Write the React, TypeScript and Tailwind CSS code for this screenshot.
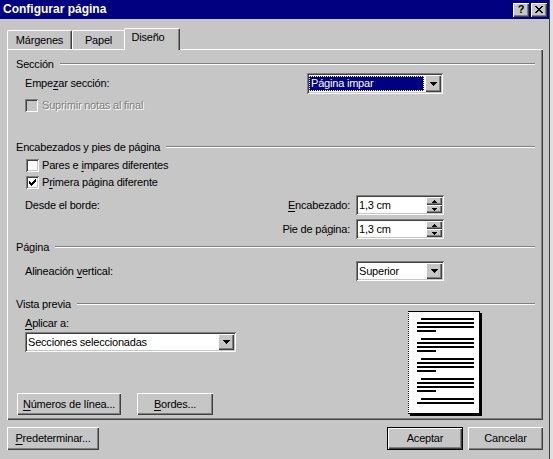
import React from "react";

const RAISED =
  "shadow-[inset_1px_1px_0_#ffffff,inset_-1px_-1px_0_#404040,inset_-2px_-2px_0_#808080]";
const SUNKEN =
  "shadow-[inset_1px_1px_0_#808080,inset_-1px_-1px_0_#ffffff,inset_2px_2px_0_#404040,inset_-2px_-2px_0_#c6c6c6]";

function DownArrow() {
  return (
    <svg width="7" height="4" viewBox="0 0 7 4" shapeRendering="crispEdges">
      <path d="M0 0h7v1H0z M1 1h5v1H1z M2 2h3v1H2z M3 3h1v1H3z" fill="#000" />
    </svg>
  );
}

function SpinUp() {
  return (
    <svg width="5" height="3" viewBox="0 0 5 3" shapeRendering="crispEdges">
      <path d="M2 0h1v1H2z M1 1h3v1H1z M0 2h5v1H0z" fill="#000" />
    </svg>
  );
}

function SpinDown() {
  return (
    <svg width="5" height="3" viewBox="0 0 5 3" shapeRendering="crispEdges">
      <path d="M0 0h5v1H0z M1 1h3v1H1z M2 2h1v1H2z" fill="#000" />
    </svg>
  );
}

function Check() {
  return (
    <svg width="7" height="7" viewBox="0 0 7 7" shapeRendering="crispEdges">
      <path
        d="M6 0h1v1H6z M5 1h2v1H5z M0 2h1v1H0z M4 2h3v1H4z M0 3h2v1H0z M3 3h3v1H3z M0 4h5v1H0z M1 5h3v1H1z M2 6h1v1H2z"
        fill="#000"
      />
    </svg>
  );
}

function CloseX() {
  return (
    <svg width="8" height="7" viewBox="0 0 8 7" shapeRendering="crispEdges">
      <path
        d="M0 0h2v1H0z M6 0h2v1H6z M1 1h2v1H1z M5 1h2v1H5z M2 2h4v1H2z M3 3h2v1H3z M2 4h4v1H2z M1 5h2v1H1z M5 5h2v1H5z M0 6h2v1H0z M6 6h2v1H6z"
        fill="#000"
      />
    </svg>
  );
}

function Combo({
  className,
  children,
  selected,
}: {
  className: string;
  children: React.ReactNode;
  selected?: boolean;
}) {
  return (
    <div className={`${className} ${SUNKEN} bg-white flex p-[2px]`}>
      {selected ? (
        <div className="flex-1 flex items-center my-[1px] mr-[1px] bg-[#000080] text-white border border-dotted border-[#ffffc0] pl-[1px] whitespace-nowrap">
          {children}
        </div>
      ) : (
        <div className="flex-1 flex items-center pl-[1px] whitespace-nowrap">{children}</div>
      )}
      <div className={`w-[16px] h-full bg-[#c6c6c6] ${RAISED} flex items-center justify-center`}>
        <DownArrow />
      </div>
    </div>
  );
}

function Spin({ value }: { value: string }) {
  return (
    <div className={`w-[88px] h-[20px] ${SUNKEN} bg-white flex p-[2px]`}>
      <div className="flex-1 flex items-center pl-[1px]">{value}</div>
      <div className="w-[16px] h-full flex flex-col">
        <div className={`flex-1 bg-[#c6c6c6] ${RAISED} flex items-center justify-center`}>
          <SpinUp />
        </div>
        <div className={`flex-1 bg-[#c6c6c6] ${RAISED} flex items-center justify-center`}>
          <SpinDown />
        </div>
      </div>
    </div>
  );
}

function CheckBox({ checked, disabled }: { checked?: boolean; disabled?: boolean }) {
  return (
    <span
      className={`w-[13px] h-[13px] shrink-0 ${SUNKEN} ${
        disabled ? "bg-[#c6c6c6]" : "bg-white"
      } flex items-center justify-center`}
    >
      {checked && <Check />}
    </span>
  );
}

function Heading({ children, className }: { children: React.ReactNode; className: string }) {
  return (
    <div className={`${className} h-[14px] flex items-center pl-[9px] pr-[8px]`}>
      <span className="whitespace-nowrap">{children}</span>
      <div className="flex-1 ml-[6px] h-[2px] border-t border-t-[#808080] border-b border-b-white" />
    </div>
  );
}

function Button({
  className,
  children,
  isDefault,
}: {
  className: string;
  children: React.ReactNode;
  isDefault?: boolean;
}) {
  return (
    <div
      className={`${className} bg-[#c6c6c6] ${RAISED} ${
        isDefault ? "border border-black" : ""
      } flex items-center justify-center whitespace-nowrap`}
    >
      {children}
    </div>
  );
}

function U({ children }: { children: React.ReactNode }) {
  return <span className="underline underline-offset-[2px]">{children}</span>;
}

function PreviewPage() {
  const groups = [0, 1, 2, 3];
  return (
    <div className="w-[72px] h-[103px] bg-white border border-black [border-left-style:dotted] shadow-[2px_2px_0_#000000] flex flex-col pt-[6px] pl-[8px]">
      {groups.map((g) => (
        <div key={g} className={`flex flex-col ${g === 0 ? "" : "mt-[6px]"}`}>
          <div className="ml-[4px] w-[53px] h-[2px] bg-black" />
          <div className="mt-[2px] w-[57px] h-[2px] bg-black" />
          <div className="mt-[2px] w-[57px] h-[2px] bg-black" />
          <div className="mt-[2px] w-[19px] h-[2px] bg-black" />
        </div>
      ))}
      <div className="flex flex-col mt-[6px]">
        <div className="ml-[4px] w-[53px] h-[2px] bg-black" />
        <div className="mt-[2px] w-[57px] h-[2px] bg-black" />
      </div>
    </div>
  );
}

export default function App() {
  return (
    <div className="w-[553px] h-[459px] bg-[#c6c6c6] flex overflow-hidden select-none font-['Liberation_Sans',Arial,sans-serif] text-[11px] leading-[13px] tracking-[-0.2px] text-black">
      <div className="w-[549px] h-full flex flex-col">
        {/* Title bar */}
        <div className="h-[19px] bg-[#000080] flex items-center pl-[3px] pr-[2px]">
          <span className="flex-1 text-white font-bold text-[12px] tracking-normal">Configurar página</span>
          <div className={`w-[16px] h-[14px] bg-[#c6c6c6] ${RAISED} flex items-center justify-center font-bold text-[11px] leading-[11px] pb-[1px]`}>
            ?
          </div>
          <div className={`ml-[2px] w-[16px] h-[14px] bg-[#c6c6c6] ${RAISED} flex items-center justify-center pb-[1px]`}>
            <CloseX />
          </div>
        </div>

        {/* Tabs */}
        <div className="mt-[9px] h-[21px] flex items-end pl-[7px] relative z-10">
          <div className="w-[65px] h-[19px] border-l border-t border-white border-r border-r-[#404040] rounded-t-[2px] shadow-[inset_-1px_0_0_#808080] flex justify-center items-start pt-[3px]">
            Márgenes
          </div>
          <div className="w-[52px] h-[19px] border-l border-t border-white rounded-tl-[2px] flex justify-center items-start pt-[3px]">
            Papel
          </div>
          <div className="w-[56px] h-[22px] -mb-[1px] bg-[#c6c6c6] border-l border-t border-white border-r border-r-[#404040] rounded-t-[2px] shadow-[inset_-1px_0_0_#808080] flex justify-center items-start pt-[2px] pr-[8px]">
            Diseño
          </div>
        </div>

        {/* Panel */}
        <div className={`ml-[7px] w-[536px] h-[371px] ${RAISED} flex flex-col pt-[8px]`}>
          <Heading className="">Sección</Heading>

          <div className="mt-[2px] h-[21px] flex items-center pl-[18px] pr-[100px]">
            <span className="flex-1">
              Empe<U>z</U>ar sección:
            </span>
            <Combo className="w-[136px] h-[21px]" selected>
              Página impar
            </Combo>
          </div>

          <div className="mt-[5px] h-[13px] flex items-center pl-[18px] gap-[4px]">
            <CheckBox disabled />
            <span className="text-[#808080] [text-shadow:1px_1px_0_#ffffff]">Suprimir notas al final</span>
          </div>

          <Heading className="mt-[28px]">Encabezados y pies de página</Heading>

          <div className="mt-[5px] h-[13px] flex items-center pl-[19px] gap-[3px]">
            <CheckBox />
            <span>
              Pares e <U>i</U>mpares diferentes
            </span>
          </div>

          <div className="mt-[4px] h-[13px] flex items-center pl-[19px] gap-[3px]">
            <CheckBox checked />
            <span>
              P<U>r</U>imera página diferente
            </span>
          </div>

          <div className="mt-[6px] h-[20px] flex items-center pl-[18px] pr-[99px]">
            <span className="flex-1">Desde el borde:</span>
            <span className="mr-[6px]">
              <U>E</U>ncabezado:
            </span>
            <Spin value="1,3 cm" />
          </div>

          <div className="mt-[4px] h-[20px] flex items-center pl-[18px] pr-[99px]">
            <span className="flex-1" />
            <span className="mr-[6px]">
              Pie de pá<U>g</U>ina:
            </span>
            <Spin value="1,3 cm" />
          </div>

          <Heading className="mt-[1px]">Página</Heading>

          <div className="mt-[7px] h-[20px] flex items-center pl-[18px] pr-[99px]">
            <span className="flex-1">
              Alineación <U>v</U>ertical:
            </span>
            <Combo className="w-[88px] h-[20px]">Superior</Combo>
          </div>

          <Heading className="mt-[16px]">Vista previa</Heading>

          <div className="flex">
            <div className="w-[401px] flex flex-col">
              <div className="mt-[6px] h-[13px] flex items-center pl-[18px]">
                <span>
                  <U>A</U>plicar a:
                </span>
              </div>
              <Combo className="mt-[2px] ml-[18px] w-[211px] h-[20px]">Secciones seleccionadas</Combo>
              <div className="mt-[41px] ml-[10px] flex gap-[16px]">
                <Button className="w-[104px] h-[22px]">
                  <span>
                    <U>N</U>úmeros de línea...
                  </span>
                </Button>
                <Button className="w-[76px] h-[22px]">
                  <span>
                    <U>B</U>ordes...
                  </span>
                </Button>
              </div>
            </div>
            <PreviewPage />
          </div>
        </div>

        {/* Bottom buttons */}
        <div className="mt-[7px] h-[23px] flex pl-[7px] pr-[6px]">
          <Button className="w-[92px] h-[23px]">
            <span>
              <U>P</U>redeterminar...
            </span>
          </Button>
          <div className="flex-1" />
          <Button className="w-[76px] h-[23px]" isDefault>
            Aceptar
          </Button>
          <Button className="ml-[5px] w-[75px] h-[23px]">Cancelar</Button>
        </div>
      </div>
      <div className="w-[1px] h-full bg-[#404040]" />
      <div className="flex-1 h-full bg-[#e0e0e0]" />
    </div>
  );
}
